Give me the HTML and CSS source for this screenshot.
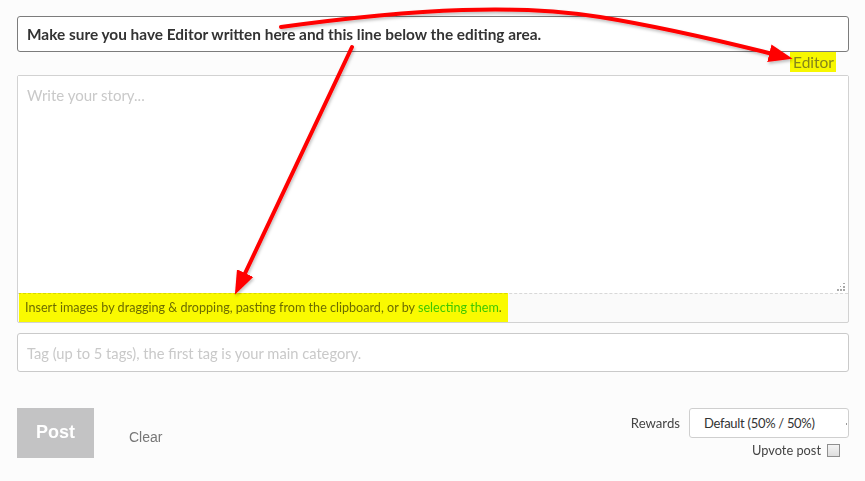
FILE: index.html
```html
<!DOCTYPE html>
<html lang="en">
<head>
<meta charset="utf-8">
<title>Submit a story</title>
<link rel="stylesheet" href="styles.css">
</head>
<body>
<main class="composer">
  <div class="field title-field">Make sure you have Editor written here and this line below the editing area.</div>
  <div class="mode-row"><span class="mode-label">Editor</span></div>

  <div class="editor">
    <div class="body-area">
      <span class="placeholder">Write your story...</span>
      <svg class="grip" width="8" height="8" viewBox="0 0 8 8">
        <rect x="6" y="0" width="1" height="1"/><rect x="7" y="0" width="1" height="1"/>
        <rect x="3" y="3" width="1" height="1"/><rect x="6" y="3" width="2" height="2"/>
        <rect x="0" y="6" width="2" height="2"/><rect x="3" y="6" width="2" height="2"/><rect x="6" y="6" width="2" height="2"/>
      </svg>
    </div>
    <div class="dropzone">
      <p>Insert images by dragging &amp; dropping, pasting from the clipboard, or by <a href="#">selecting them</a>.</p>
      <span class="marker marker-drop"></span>
    </div>
  </div>

  <div class="field tag-field"><span class="placeholder">Tag (up to 5 tags), the first tag is your main category.</span></div>

  <div class="footer">
    <div class="actions">
      <button class="btn-post" type="button">Post</button>
      <button class="btn-clear" type="button">Clear</button>
    </div>
    <div class="options">
      <div class="rewards">
        <span class="rewards-label">Rewards</span>
        <div class="select">Default (50% / 50%)<span class="select-caret"></span></div>
      </div>
      <label class="upvote">Upvote post <span class="checkbox"></span></label>
    </div>
  </div>
</main>

<svg class="callouts" width="865" height="481" viewBox="0 0 865 481">
  <defs>
    <marker id="head" markerUnits="userSpaceOnUse" markerWidth="24" markerHeight="18" refX="12" refY="9" orient="auto">
      <path d="M0,0 L24,9 L0,18 Z" fill="#ff0000"/>
    </marker>
    <filter id="soft" x="-10%" y="-10%" width="120%" height="130%">
      <feDropShadow dx="1" dy="2" stdDeviation="1.5" flood-color="#000" flood-opacity="0.25"/>
    </filter>
  </defs>
  <g filter="url(#soft)" fill="none" stroke="#ff0000" stroke-width="4" stroke-linecap="round">
    <path d="M281,27 C420,8 520,4 600,17 C680,30 740,46 781,56" marker-end="url(#head)"/>
    <path d="M352,47 L240,284" marker-end="url(#head)"/>
  </g>
</svg>
</body>
</html>
```

FILE: styles.css
```css
* { box-sizing: border-box; }

html, body {
  margin: 0;
  background: #fcfcfc;
}

body {
  width: 865px;
  height: 481px;
  overflow: hidden;
  position: relative;
  font-family: Lato, "Noto Sans", sans-serif;
  color: #333;
}

.composer {
  padding: 16px 16px 0 17px;
  width: 865px;
}

.field {
  background: #fff;
  border: 1px solid #cacaca;
  border-radius: 3px;
  padding: 0 9px;
  display: flex;
  align-items: center;
}

.title-field {
  height: 36px;
  border-color: #7c7c7c;
  font-weight: 700;
  font-size: 15.4px;
  color: #333;
}

.mode-row {
  display: flex;
  justify-content: flex-end;
  height: 20px;
  margin: 0 13px 3px 0;
}

.mode-label {
  background: #f7f700;
  color: #85851a;
  font-size: 15.5px;
  line-height: 20px;
  padding: 0 2px 0 3px;
}

.editor {
  border: 1px solid #d2d2d2;
  border-radius: 2px;
  background: #fafafa;
}

.body-area {
  position: relative;
  height: 217px;
  background: #fff;
  padding: 9px 9px;
}

.placeholder {
  color: #c9c9c9;
  font-size: 15px;
}

.tag-field .placeholder {
  font-size: 14.7px;
}

.grip {
  position: absolute;
  right: 3px;
  bottom: 2px;
  fill: #a9a9a9;
}

.dropzone {
  position: relative;
  height: 29px;
  border-top: 1px dashed #d8d8d8;
}

.dropzone p {
  margin: 0;
  padding: 0 7px;
  line-height: 28px;
  font-size: 12.6px;
  color: #6c6c6c;
}

.dropzone a {
  color: #3fc8f8;
  text-decoration: none;
}

/* highlighter stroke laid over the hint text */
.marker {
  position: absolute;
  background: #ffff00;
  mix-blend-mode: multiply;
}

.marker-drop {
  left: 1px;
  top: -1px;
  width: 489px;
  height: 29px;
}

.tag-field {
  margin-top: 10px;
  height: 39px;
}

.footer {
  margin-top: 36px;
  display: flex;
  justify-content: space-between;
  align-items: flex-start;
}

.actions {
  display: flex;
  align-items: center;
}

.btn-post {
  width: 77px;
  height: 50px;
  border: 0;
  background: #c3c3c4;
  color: #fff;
  font-family: "Liberation Sans", Arial, sans-serif;
  font-weight: 700;
  font-size: 18px;
  padding: 0 0 2px;
}

.btn-clear {
  margin-left: 35px;
  margin-top: 7px;
  border: 0;
  background: none;
  padding: 0;
  color: #777;
  font-family: "Liberation Sans", Arial, sans-serif;
  font-size: 14px;
}

.options {
  display: flex;
  flex-direction: column;
  align-items: flex-end;
}

.rewards {
  display: flex;
  align-items: center;
  gap: 9px;
}

.rewards-label {
  font-size: 13.2px;
  color: #444;
}

.select {
  position: relative;
  width: 160px;
  height: 30px;
  background: #fff;
  border: 1px solid #cfcfcf;
  border-radius: 3px;
  padding-left: 14px;
  font-size: 13px;
  letter-spacing: -0.3px;
  line-height: 28px;
  color: #333;
}

.select-caret {
  position: absolute;
  right: 1px;
  top: 14px;
  width: 1px;
  height: 2px;
  background: #999;
}

.upvote {
  display: flex;
  align-items: center;
  gap: 6px;
  margin: 4px 9px 0 0;
  font-size: 12.8px;
  color: #444;
}

.checkbox {
  width: 13px;
  height: 13px;
  border: 1px solid #8f8f8f;
  background: linear-gradient(#f4f4f4, #dedede);
}

.callouts {
  position: absolute;
  left: 0;
  top: 0;
  pointer-events: none;
}
```
